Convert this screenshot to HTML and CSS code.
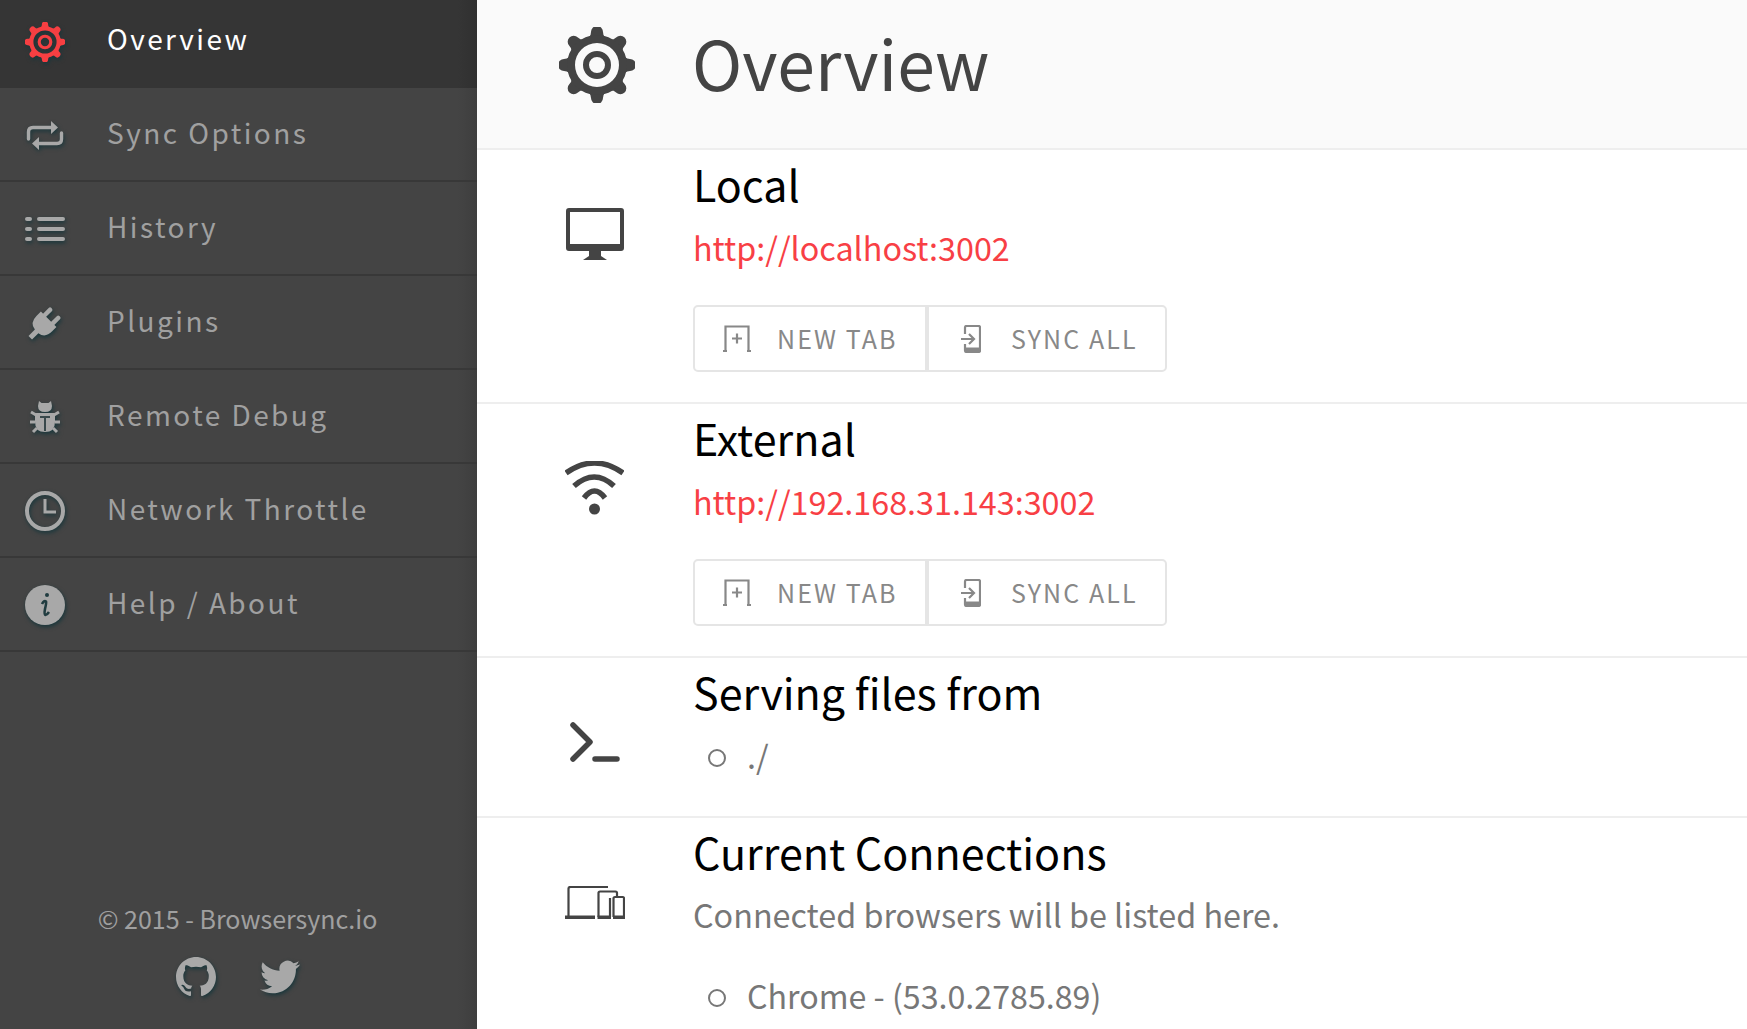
FILE: index.html
```html
<!DOCTYPE html>
<html lang="en">
<head>
    <meta charset="UTF-8" />
    <title>Browsersync - Overview</title>
    <link rel="stylesheet" href="styles.css">
</head>
<body>
<svg class="defs" width="0" height="0">
    <symbol id="gear" viewBox="-38 -38 76 76">
        <path id="tooth" d="M-13 -25Q-6 -27 -6 -33A5.500 5.500 0 0 1 6 -33Q6 -27 13 -25Z" />
        <use href="#tooth" transform="rotate(45)" />
        <use href="#tooth" transform="rotate(90)" />
        <use href="#tooth" transform="rotate(135)" />
        <use href="#tooth" transform="rotate(180)" />
        <use href="#tooth" transform="rotate(225)" />
        <use href="#tooth" transform="rotate(270)" />
        <use href="#tooth" transform="rotate(315)" />
        <path fill-rule="evenodd" d="M-30 0A30 30 0 1 0 30 0A30 30 0 1 0 -30 0ZM-22 0A22 22 0 1 1 22 0A22 22 0 1 1 -22 0ZM-14 0A14 14 0 1 0 14 0A14 14 0 1 0 -14 0ZM-8 0A8 8 0 1 1 8 0A8 8 0 1 1 -8 0Z" />
    </symbol>
</svg>

<div class="app">
    <aside class="sidebar">
        <nav class="nav">
            <a class="nav-item active">
                <svg class="nav-icon" viewBox="-38 -38 76 76"><use href="#gear" x="-38" y="-38" width="76" height="76" /></svg>
                <span>Overview</span>
            </a>
            <a class="nav-item">
                <svg class="nav-icon" viewBox="0 0 40 40">
                    <path class="line" d="M3.500 24V17Q3.500 12.500 8 12.500H27M36.500 18V24Q36.500 28.500 32 28.500H13" />
                    <path d="M26 6L33 12.500L26 19ZM14 22L7 28.500L14 35Z" />
                </svg>
                <span>Sync Options</span>
            </a>
            <a class="nav-item">
                <svg class="nav-icon" viewBox="0 0 40 40"><path class="line bars" d="M2 10H5M14 10H38M2 20H5M14 20H38M2 30H5M14 30H38" /></svg>
                <span>History</span>
            </a>
            <a class="nav-item">
                <svg class="nav-icon" viewBox="0 0 40 40">
                    <g transform="translate(-2 2) rotate(45 20 20)">
                        <path d="M9 12H31V18Q31 28 22.500 29V38H17.500V29Q9 28 9 18Z" />
                        <rect x="12" y="2" width="4.500" height="12" rx="2" />
                        <rect x="23.500" y="2" width="4.500" height="12" rx="2" />
                    </g>
                </svg>
                <span>Plugins</span>
            </a>
            <a class="nav-item">
                <svg class="nav-icon" viewBox="0 0 40 40">
                    <path d="M14 4L16.500 6H23.500L26 4L27 9Q27 15 20 15Q13 15 13 9Z" />
                    <path d="M10 16H30V25Q30 35 20 35Q10 35 10 25Z" />
                    <path class="leg" d="M11 18L6 15M10 25H5M12 31L8 35M29 18L34 15M30 25H35M28 31L32 35" />
                    <path class="bug-slit" d="M15 20H25M20 20V34" />
                </svg>
                <span>Remote Debug</span>
            </a>
            <a class="nav-item">
                <svg class="nav-icon" viewBox="0 0 40 40">
                    <circle class="line clock" cx="20" cy="20" r="18" />
                    <path class="line hands" d="M20 8V21H31" />
                </svg>
                <span>Network Throttle</span>
            </a>
            <a class="nav-item">
                <svg class="nav-icon" viewBox="0 0 40 40">
                    <circle cx="20" cy="20" r="20" />
                    <circle class="info-mark" cx="22" cy="10" r="2" />
                    <path class="info-stroke" d="M17 19Q19 15 21 16.500Q21.500 18 20 24Q19 29.500 20.500 30Q22 30 24 27" />
                </svg>
                <span>Help / About</span>
            </a>
        </nav>

        <footer class="side-footer">
            <p>© 2015 - Browsersync.io</p>
            <div class="social">
                <svg class="social-icon" viewBox="0 0 16 16"><path d="M8 0C3.580 0 0 3.580 0 8c0 3.540 2.290 6.530 5.470 7.590.4.070.55-.17.55-.38 0-.19-.01-.82-.01-1.490-2.010.37-2.530-.49-2.690-.94-.09-.23-.48-.94-.82-1.130-.28-.15-.68-.52-.01-.53.63-.01 1.080.58 1.230.82.72 1.210 1.870.87 2.330.66.07-.52.28-.87.51-1.070-1.780-.2-3.640-.89-3.640-3.950 0-.87.31-1.590.82-2.150-.08-.2-.36-1.020.08-2.120 0 0 .67-.21 2.200.82.64-.18 1.320-.27 2-.27.68 0 1.360.09 2 .27 1.530-1.040 2.200-.82 2.200-.82.44 1.100.16 1.920.08 2.120.51.56.82 1.270.82 2.150 0 3.070-1.870 3.750-3.650 3.950.29.25.54.73.54 1.480 0 1.070-.01 1.930-.01 2.200 0 .21.15.46.55.38A8.013 8.013 0 0016 8c0-4.420-3.580-8-8-8z" /></svg>
                <svg class="social-icon" viewBox="0 0 24 24"><path d="M23.953 4.570a10 10 0 01-2.825.775 4.958 4.958 0 002.163-2.723c-.951.555-2.005.959-3.127 1.184a4.920 4.920 0 00-8.384 4.482C7.690 8.095 4.067 6.130 1.640 3.162a4.822 4.822 0 00-.666 2.475c0 1.710.870 3.213 2.188 4.096a4.904 4.904 0 01-2.228-.616v.060a4.923 4.923 0 003.946 4.827 4.996 4.996 0 01-2.212.085 4.936 4.936 0 004.604 3.417 9.867 9.867 0 01-6.102 2.105c-.39 0-.779-.023-1.170-.067a13.995 13.995 0 007.557 2.209c9.053 0 13.998-7.496 13.998-13.985 0-.21 0-.42-.015-.63A9.935 9.935 0 0024 4.590z" /></svg>
            </div>
        </footer>
    </aside>

    <main class="content">
        <header class="page-head">
            <div class="icon-col">
                <svg class="head-icon" viewBox="-38 -38 76 76"><use href="#gear" x="-38" y="-38" width="76" height="76" /></svg>
            </div>
            <h1>Overview</h1>
        </header>

        <section class="section">
            <div class="icon-col">
                <svg class="sec-icon" width="58" height="52" viewBox="0 0 58 52">
                    <path fill-rule="evenodd" d="M3 0H55Q58 0 58 3V40Q58 43 55 43H3Q0 43 0 40V3Q0 0 3 0ZM4 4V36H54V4Z" />
                    <path d="M23 43H35V48L41 52H17L23 48Z" />
                </svg>
            </div>
            <div class="sec-body">
                <h2>Local</h2>
                <a class="url">http://localhost:3002</a>
                <div class="btn-group">
                    <a class="btn btn-new">
                        <svg class="btn-icon" width="28" height="27" viewBox="0 0 28 27"><path d="M2.500 25.500V1.500H25.500V25.500M0 26H4M24 26H28M14 8.500V18.500M9 13.500H19" /></svg>
                        NEW TAB
                    </a>
                    <a class="btn btn-sync">
                        <svg class="btn-icon" width="20" height="28" viewBox="0 0 20 28"><path d="M4 9V2.500Q4 1 5.500 1H17.500Q19 1 19 2.500V25.500Q19 27 17.500 27H5.500Q4 27 4 25.500V19M0 14H12M8 9L13 14L8 19" /><path class="btn-band" d="M4 24.500H19" /></svg>
                        SYNC ALL
                    </a>
                </div>
            </div>
        </section>

        <section class="section">
            <div class="icon-col">
                <svg class="sec-icon" width="59" height="54" viewBox="0 0 59 54">
                    <path class="wifi" d="M1 12Q29.500 -8 58 12M9 25Q29.500 7 49 25M19 37Q29.500 23 40 37" />
                    <circle cx="29.500" cy="48" r="5.500" />
                </svg>
            </div>
            <div class="sec-body">
                <h2>External</h2>
                <a class="url">http://192.168.31.143:3002</a>
                <div class="btn-group">
                    <a class="btn btn-new">
                        <svg class="btn-icon" width="28" height="27" viewBox="0 0 28 27"><path d="M2.500 25.500V1.500H25.500V25.500M0 26H4M24 26H28M14 8.500V18.500M9 13.500H19" /></svg>
                        NEW TAB
                    </a>
                    <a class="btn btn-sync">
                        <svg class="btn-icon" width="20" height="28" viewBox="0 0 20 28"><path d="M4 9V2.500Q4 1 5.500 1H17.500Q19 1 19 2.500V25.500Q19 27 17.500 27H5.500Q4 27 4 25.500V19M0 14H12M8 9L13 14L8 19" /><path class="btn-band" d="M4 24.500H19" /></svg>
                        SYNC ALL
                    </a>
                </div>
            </div>
        </section>

        <section class="section">
            <div class="icon-col">
                <svg class="sec-icon" width="50" height="40" viewBox="0 0 50 40">
                    <path class="prompt" d="M3 3L20 20L3 37M25 37H47" />
                </svg>
            </div>
            <div class="sec-body">
                <h2>Serving files from</h2>
                <ul class="items">
                    <li>./</li>
                </ul>
            </div>
        </section>

        <section class="section section-last">
            <div class="icon-col">
                <svg class="sec-icon" width="60" height="33" viewBox="0 0 60 33">
                    <path class="device" d="M3.500 31V2.500Q3.500 1 5.500 1H43" />
                    <path d="M0 29.500H30V33H0Z" />
                    <path class="device" d="M33.500 31V7Q33.500 5.500 35 5.500H50.500Q52 5.500 52 7V10M45 12V31" />
                    <path d="M32.500 29.500H46V33H32.500Z" />
                    <path class="device" d="M48.500 31V12.500Q48.500 11 50 11H58Q59 11 59 12.500V31" />
                    <path d="M48 29.500H60V33H48Z" />
                </svg>
            </div>
            <div class="sec-body">
                <h2>Current Connections</h2>
                <p class="note">Connected browsers will be listed here.</p>
                <ul class="items">
                    <li>Chrome - (53.0.2785.89)</li>
                </ul>
            </div>
        </section>
    </main>
</div>
</body>
</html>
```

FILE: styles.css
```css
* {
  box-sizing: border-box;
}
html, body {
  margin: 0;
  height: 100%;
  overflow: hidden;
}
body {
  font-family: "Noto Sans CJK JP", "Source Sans Pro", "Open Sans", sans-serif;
  background: #fff;
  color: #444;
}
.defs {
  position: absolute;
}
.app {
  display: flex;
  height: 1029px;
}

/* sidebar */
.sidebar {
  width: 477px;
  flex: none;
  display: flex;
  flex-direction: column;
  background: linear-gradient(to right, #444 96%, #3e3e3e 100%);
  color: #a0a0a0;
}
.nav-item {
  display: flex;
  align-items: center;
  gap: 42px;
  height: 94px;
  padding-left: 25px;
  border-bottom: 2px solid #383838;
  font-size: 28px;
  letter-spacing: 2.450px;
}
.nav-item span {
  margin-bottom: 5px;
}
.nav-item .nav-icon {
  margin-top: 2px;
}
.nav-item.active {
  height: 88px;
  border-bottom: none;
  padding-bottom: 4px;
  background: linear-gradient(to right, #353535 96%, #303030 100%);
  color: #fff;
}
.nav-item.active span {
  margin-bottom: 9px;
}
.nav-item.active .nav-icon {
  margin-top: 0;
}
.nav-icon {
  width: 40px;
  height: 40px;
  flex: none;
  fill: #a8a8a8;
  filter: drop-shadow(1px 2px 2px #17363b);
}
.active .nav-icon {
  fill: #f63f42;
}
.line {
  fill: none;
  stroke: #a8a8a8;
  stroke-width: 3.400;
  stroke-linecap: round;
  stroke-linejoin: round;
}
.bars {
  stroke-width: 4;
}
.clock {
  stroke-width: 4;
}
.hands {
  stroke-width: 3;
  stroke-linecap: butt;
  stroke-linejoin: miter;
}
.leg {
  fill: none;
  stroke: #a8a8a8;
  stroke-width: 3;
}
.bug-slit {
  fill: none;
  stroke: #39494c;
  stroke-width: 2;
}
.info-mark {
  fill: #203c40;
}
.info-stroke {
  fill: none;
  stroke: #203c40;
  stroke-width: 2.600;
}
.side-footer {
  margin-top: auto;
  padding: 0 2px 32px 0;
  text-align: center;
  font-size: 25px;
}
.side-footer p {
  margin: 0 0 19px;
  line-height: 40px;
}
.social {
  display: flex;
  justify-content: center;
  gap: 44px;
}
.social-icon {
  width: 40px;
  height: 40px;
  fill: #a8a8a8;
  filter: drop-shadow(1px 2px 2px #17363b);
}

/* main column */
.content {
  flex: 1;
  min-width: 0;
}
.icon-col {
  width: 216px;
  flex: none;
  display: flex;
  justify-content: center;
  align-items: center;
  padding-left: 19px;
}
.page-head {
  display: flex;
  align-items: center;
  height: 150px;
  background: #fafafa;
  border-bottom: 2px solid #eee;
}
.head-icon {
  width: 76px;
  height: 76px;
  fill: #444;
  margin: -18px 0 0 4px;
}
.page-head h1 {
  margin: -24px 0 0 -1px;
  font-size: 67.800px;
  font-weight: 400;
  line-height: 90px;
  color: #444;
}
.section {
  display: flex;
  align-items: flex-start;
  border-bottom: 2px solid #eee;
  padding-bottom: 30px;
}
.section-last {
  border-bottom: none;
}
.section .icon-col {
  height: 128px;
  padding-top: 40px;
}
.sec-icon {
  fill: #444;
}
.sec-body {
  flex: 1;
}
h2 {
  margin: 0;
  font-size: 43px;
  font-weight: 400;
  line-height: 66px;
  color: #000;
}
.url {
  display: block;
  font-size: 32.300px;
  line-height: 62px;
  color: #f83f45;
}
.note {
  margin: 0;
  font-size: 32.300px;
  line-height: 60px;
  color: #777;
}
.btn-group {
  display: flex;
  margin-top: 27px;
}
.btn {
  display: flex;
  align-items: center;
  height: 67px;
  padding-bottom: 2px;
  border: 2px solid #e5e5e5;
  font-size: 25px;
  letter-spacing: 2.100px;
  color: #888;
}
.btn-new {
  width: 234px;
  padding-left: 28px;
  gap: 26px;
  border-radius: 5px 0 0 5px;
}
.btn-sync {
  width: 240px;
  padding-left: 32px;
  gap: 30px;
  border-radius: 0 5px 5px 0;
}
.btn-icon {
  flex: none;
  margin-top: 2px;
  fill: none;
  stroke: #888;
  stroke-width: 2.200;
}
.btn-band {
  stroke-width: 4;
}
.wifi {
  fill: none;
  stroke: #444;
  stroke-width: 5.500;
}
.prompt {
  fill: none;
  stroke: #444;
  stroke-width: 5.500;
  stroke-linecap: round;
  stroke-linejoin: round;
}
.device {
  fill: none;
  stroke: #444;
  stroke-width: 2.200;
}
.items {
  margin: 4px 0 0;
  padding-left: 15px;
  list-style: none;
  font-size: 32.200px;
  line-height: 55px;
  color: #777;
}
.items li {
  display: flex;
  align-items: center;
  gap: 21px;
}
.items li::before {
  content: "";
  width: 14px;
  height: 14px;
  margin-top: 4px;
  border: 2.500px solid #777;
  border-radius: 50%;
}
.note + .items {
  margin-top: 24px;
}
```
